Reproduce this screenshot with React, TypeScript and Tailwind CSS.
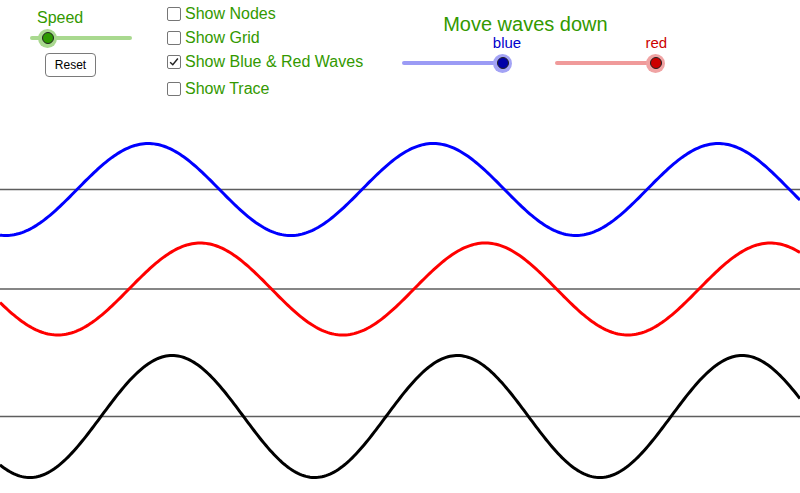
import React from 'react';

const green = 'text-[#339900]';

function wavePath(axis: number, amp: number, shift: number) {
  const pts: string[] = [];
  for (let x = 0; x <= 800; x += 2) {
    const y = axis - amp * Math.sin((2 * Math.PI * (x - shift)) / 285);
    pts.push(`${x === 0 ? 'M' : 'L'}${x},${y.toFixed(2)}`);
  }
  return pts.join(' ');
}

function Checkbox({ label, checked }: { label: string; checked?: boolean }) {
  return (
    <label className="flex items-center gap-[4px] h-[24px]">
      <span className="w-[14px] h-[14px] rounded-[2px] border-[1.5px] border-[#767676] bg-white flex items-center justify-center">
        {checked && (
          <svg viewBox="0 0 14 14" className="w-[12px] h-[12px]">
            <path d="M2.5 7.2 L5.6 10.2 L11.5 3" fill="none" stroke="#222" strokeWidth={1.7} />
          </svg>
        )}
      </span>
      <span className={`text-[16px] leading-none ${green}`}>{label}</span>
    </label>
  );
}

function Slider({
  width,
  pos,
  track,
  knob,
  halo,
}: {
  width: string;
  pos: string;
  track: string;
  knob: string;
  halo: string;
}) {
  return (
    <div className={`relative h-[20px] ${width}`}>
      <div className={`absolute left-0 right-0 top-[8px] h-[4px] rounded-full ${track}`} />
      <div className={`absolute top-[0.5px] ${pos} w-[19px] h-[19px] rounded-full ${halo} flex items-center justify-center`}>
        <div className={`w-[12px] h-[12px] rounded-full border border-[#222] ${knob}`} />
      </div>
    </div>
  );
}

export default function App() {
  return (
    <div className="w-[800px] h-[493px] bg-white overflow-hidden font-['Liberation_Sans',Arial,sans-serif]">
      <div className="h-[110px] flex">
        <div className="ml-[30px] w-[102px] flex flex-col">
          <span className={`mt-[9px] ml-[7px] text-[16px] leading-[18px] ${green}`}>Speed</span>
          <Slider
            width="w-[102px] mt-[1px]"
            pos="left-[8px]"
            track="bg-[#a9d98f]"
            knob="bg-[#2d9a00]"
            halo="bg-[#a9d98f]"
          />
          <button className="mt-[5px] ml-[15px] w-[51px] h-[24px] rounded-[4px] border border-[#7a7a7a] bg-white text-[12px] text-black">
            Reset
          </button>
        </div>
        <div className="ml-[35px] pt-[2px] flex flex-col">
          <Checkbox label="Show Nodes" />
          <Checkbox label="Show Grid" />
          <Checkbox label="Show Blue &amp; Red Waves" checked />
          <div className="mt-[3px]">
            <Checkbox label="Show Trace" />
          </div>
        </div>
        <div className="ml-[37px] flex flex-col">
          <span className={`mt-[14px] ml-[43px] text-[20px] leading-[20px] ${green}`}>Move waves down</span>
          <div className="flex mt-[1px]">
            <div className="flex flex-col ml-[2px]">
              <span className="self-end mr-[-18px] text-[15px] leading-[16px] text-[#0000cc]">blue</span>
              <Slider
                width="w-[101px] mt-[2px]"
                pos="right-[-9px]"
                track="bg-[#9b9bf5]"
                knob="bg-[#0000a8]"
                halo="bg-[#a3a3f5]"
              />
            </div>
            <div className="flex flex-col ml-[52px]">
              <span className="self-end mr-[-11px] text-[15px] leading-[16px] text-[#cc0000]">red</span>
              <Slider
                width="w-[101px] mt-[2px]"
                pos="right-[-9px]"
                track="bg-[#f09a9a]"
                knob="bg-[#cc0000]"
                halo="bg-[#f0a3a3]"
              />
            </div>
          </div>
        </div>
      </div>
      <svg width="800" height="383" viewBox="0 110 800 383" className="block">
        <line x1="0" y1="189.5" x2="800" y2="189.5" stroke="#5e5e5e" strokeWidth="1.3" />
        <line x1="0" y1="289" x2="800" y2="289" stroke="#5e5e5e" strokeWidth="1.3" />
        <line x1="0" y1="416.5" x2="800" y2="416.5" stroke="#5e5e5e" strokeWidth="1.3" />
        <path d={wavePath(189.5, 46, 77)} fill="none" stroke="#0000ff" strokeWidth="3" />
        <path d={wavePath(289, 46, 129)} fill="none" stroke="#ff0000" strokeWidth="3" />
        <path d={wavePath(416.5, 61, 101)} fill="none" stroke="#000000" strokeWidth="3" />
      </svg>
    </div>
  );
}
